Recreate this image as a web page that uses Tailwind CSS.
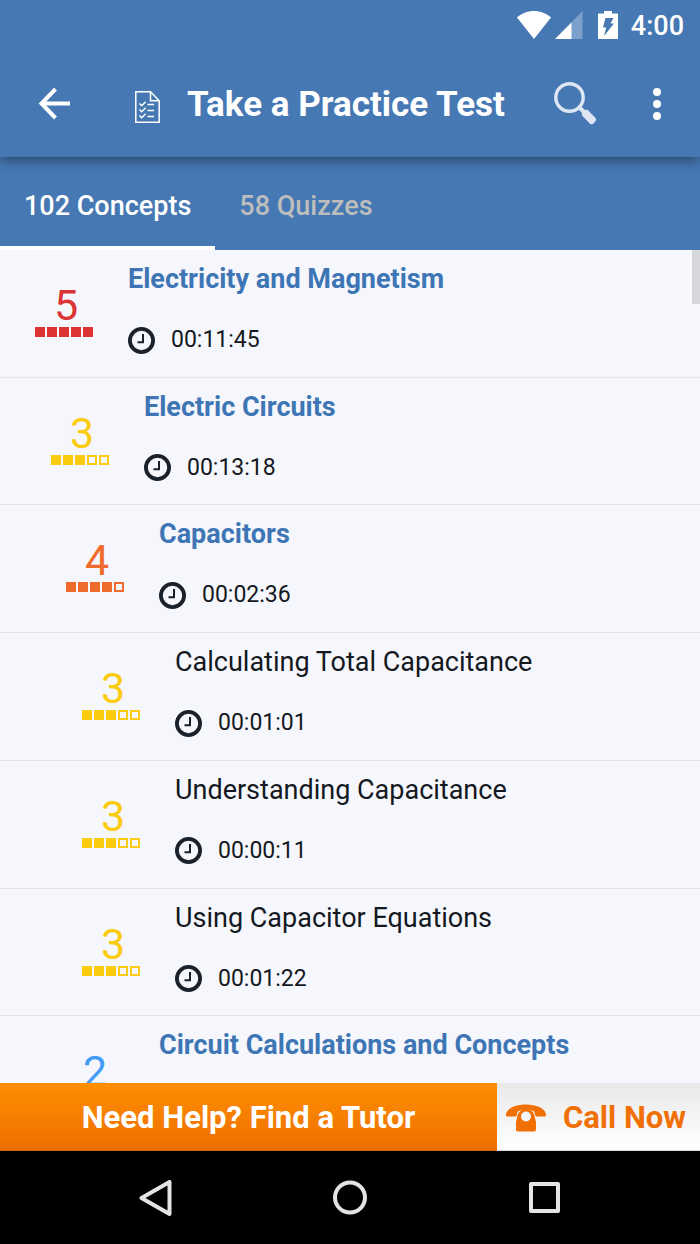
<!DOCTYPE html>
<html lang="en">

<head>
    <meta charset="UTF-8">
    <meta name="viewport" content="width=device-width, initial-scale=1.0">
    <script src="https://cdn.jsdelivr.net/npm/@tailwindcss/browser@4"></script>
    <title>Take a Practice Test</title>
</head>

<body class="h-screen flex flex-col overflow-hidden bg-[#f6f7fc] font-['Roboto',sans-serif] text-[#14181f]">

    <!-- Shared icons -->
    <svg class="hidden">
        <symbol id="clock" viewBox="0 0 27 27">
            <circle cx="13.5" cy="13.5" r="11.6" fill="none" stroke="#1b212a" stroke-width="3.8" />
            <path d="M15 7v8.3H9.5" fill="none" stroke="#1b212a" stroke-width="2" />
        </symbol>
    </svg>

    <header class="relative z-10 bg-[#4678b3] text-white shadow-[0_3px_12px_rgba(0,0,0,0.45)]">
        <!-- Status bar -->
        <div class="flex h-[50px] items-center justify-end pr-4">
            <svg class="h-7 w-[34px]" viewBox="0 0 34 28" fill="#fff">
                <path d="M17 28 0 6.5C4.500 2.500 10.500 0 17 0s12.500 2.500 17 6.500z" />
            </svg>
            <svg class="ml-1 h-7 w-7" viewBox="0 0 28 28" fill="#fff">
                <path d="M27.500 0v28H0z" opacity=".3" />
                <path d="M16.500 11.500V28H0z" />
            </svg>
            <svg class="ml-[15px] h-7 w-5" viewBox="0 0 20 28">
                <path d="M6 0h8v2.500h6V28H0V2.500h6z" fill="#fff" />
                <path d="M7.500 7h8L12.500 12.500h3.500L6 25l2.200-8.500H5z" fill="#4678b3" />
            </svg>
            <span class="ml-[13px] pt-0.5 text-[27px] leading-8 font-medium">4:00</span>
        </div>

        <!-- Toolbar -->
        <div class="flex h-[107px] items-center pr-[26px] pl-[38px]">
            <button type="button" aria-label="Back" class="h-8 w-8">
                <svg class="h-8 w-8" viewBox="0 0 32 32" fill="none" stroke="#fff" stroke-width="4">
                    <path d="M32 15.500H4M17.500 1 3.500 15.500l14 14.500" />
                </svg>
            </button>
            <svg class="mt-1.5 ml-[65px] h-8 w-[25px]" viewBox="0 0 25 32" fill="none" stroke="#fff" stroke-width="1.500">
                <path d="M.8.8H15.500l8.700 9v21.400H.8zM15.500.8v9h8.700" />
                <path d="m4.500 12.500 2.200 2.200 4-4M4.500 18.500l2.200 2.200 4-4M4.500 24.500l2.200 2.200 4-4M12.500 13.500h6.500M12.500 19.500h6.500M12.500 25.500h6.500" />
            </svg>
            <h1 class="ml-[27px] pt-0.5 text-[35px] leading-10 font-bold whitespace-nowrap">Take a Practice Test</h1>
            <button type="button" aria-label="Search" class="ml-auto h-[43px] w-[43px]">
                <svg class="h-[43px] w-[43px]" viewBox="0 0 43 43" fill="none">
                    <circle cx="15.500" cy="15.500" r="13.700" stroke="#dde6f2" stroke-width="3.400" />
                    <path d="m25 25 5 5" stroke="#dde6f2" stroke-width="4" />
                    <path d="M28 30.500 31 28q1.500-1 3 .3l7.500 7.700q1.200 1.300.3 2.800L39.500 41.500q-1.500 1.500-3.500.2L29 34.500q-1.800-2-1-4z" fill="#dde6f2" />
                </svg>
            </button>
            <button type="button" aria-label="More options" class="ml-[43px] flex h-8 w-[34px] flex-col items-center justify-between">
                <span class="h-2 w-2 rounded-full bg-white"></span>
                <span class="h-2 w-2 rounded-full bg-white"></span>
                <span class="h-2 w-2 rounded-full bg-white"></span>
            </button>
        </div>
    </header>

    <!-- Tabs -->
    <nav class="flex h-[93px] shrink-0 bg-[#4678b3] text-[27px] leading-8 font-medium">
        <button type="button" class="border-b-4 border-white px-6 pt-2 text-white">102 Concepts</button>
        <button type="button" class="border-b-4 border-transparent px-6 pt-2 text-[#bdbdbd]">58 Quizzes</button>
    </nav>

    <!-- Concepts -->
    <main class="relative min-h-0 flex-1 overflow-hidden">
        <ul class="grid h-[894px] auto-rows-fr">
            <li class="flex border-b border-[#e3e5ea] pl-[35px]">
                <div class="w-[58px] shrink-0 pt-[34px] text-center text-[#dc3434]">
                    <div class="pl-1 text-[43px] leading-[43px]">5</div>
                    <div class="flex gap-0.5">
                        <span class="h-2.5 w-2.5 bg-current"></span>
                        <span class="h-2.5 w-2.5 bg-current"></span>
                        <span class="h-2.5 w-2.5 bg-current"></span>
                        <span class="h-2.5 w-2.5 bg-current"></span>
                        <span class="h-2.5 w-2.5 bg-current"></span>
                    </div>
                </div>
                <div class="pt-[13px] pl-[35px]">
                    <a href="#" class="block text-[27px] leading-8 font-bold text-[#3e76b5]">Electricity and Magnetism</a>
                    <p class="mt-[29px] flex items-center gap-4 text-[23px] leading-8">
                        <svg class="h-[27px] w-[27px]"><use href="#clock" /></svg>00:11:45
                    </p>
                </div>
            </li>
            <li class="flex border-b border-[#e3e5ea] pl-[51px]">
                <div class="w-[58px] shrink-0 pt-[34px] text-center text-[#fbcb10]">
                    <div class="pl-1 text-[43px] leading-[43px]">3</div>
                    <div class="flex gap-0.5">
                        <span class="h-2.5 w-2.5 bg-current"></span>
                        <span class="h-2.5 w-2.5 bg-current"></span>
                        <span class="h-2.5 w-2.5 bg-current"></span>
                        <span class="h-2.5 w-2.5 border-2 border-current"></span>
                        <span class="h-2.5 w-2.5 border-2 border-current"></span>
                    </div>
                </div>
                <div class="pt-[13px] pl-[35px]">
                    <a href="#" class="block text-[27px] leading-8 font-bold text-[#3e76b5]">Electric Circuits</a>
                    <p class="mt-[29px] flex items-center gap-4 text-[23px] leading-8">
                        <svg class="h-[27px] w-[27px]"><use href="#clock" /></svg>00:13:18
                    </p>
                </div>
            </li>
            <li class="flex border-b border-[#e3e5ea] pl-[66px]">
                <div class="w-[58px] shrink-0 pt-[34px] text-center text-[#f06c2c]">
                    <div class="pl-1 text-[43px] leading-[43px]">4</div>
                    <div class="flex gap-0.5">
                        <span class="h-2.5 w-2.5 bg-current"></span>
                        <span class="h-2.5 w-2.5 bg-current"></span>
                        <span class="h-2.5 w-2.5 bg-current"></span>
                        <span class="h-2.5 w-2.5 bg-current"></span>
                        <span class="h-2.5 w-2.5 border-2 border-current"></span>
                    </div>
                </div>
                <div class="pt-[13px] pl-[35px]">
                    <a href="#" class="block text-[27px] leading-8 font-bold text-[#3e76b5]">Capacitors</a>
                    <p class="mt-[29px] flex items-center gap-4 text-[23px] leading-8">
                        <svg class="h-[27px] w-[27px]"><use href="#clock" /></svg>00:02:36
                    </p>
                </div>
            </li>
            <li class="flex border-b border-[#e3e5ea] pl-[82px]">
                <div class="w-[58px] shrink-0 pt-[34px] text-center text-[#fbcb10]">
                    <div class="pl-1 text-[43px] leading-[43px]">3</div>
                    <div class="flex gap-0.5">
                        <span class="h-2.5 w-2.5 bg-current"></span>
                        <span class="h-2.5 w-2.5 bg-current"></span>
                        <span class="h-2.5 w-2.5 bg-current"></span>
                        <span class="h-2.5 w-2.5 border-2 border-current"></span>
                        <span class="h-2.5 w-2.5 border-2 border-current"></span>
                    </div>
                </div>
                <div class="pt-[13px] pl-[35px]">
                    <a href="#" class="block text-[27px] leading-8">Calculating Total Capacitance</a>
                    <p class="mt-[29px] flex items-center gap-4 text-[23px] leading-8">
                        <svg class="h-[27px] w-[27px]"><use href="#clock" /></svg>00:01:01
                    </p>
                </div>
            </li>
            <li class="flex border-b border-[#e3e5ea] pl-[82px]">
                <div class="w-[58px] shrink-0 pt-[34px] text-center text-[#fbcb10]">
                    <div class="pl-1 text-[43px] leading-[43px]">3</div>
                    <div class="flex gap-0.5">
                        <span class="h-2.5 w-2.5 bg-current"></span>
                        <span class="h-2.5 w-2.5 bg-current"></span>
                        <span class="h-2.5 w-2.5 bg-current"></span>
                        <span class="h-2.5 w-2.5 border-2 border-current"></span>
                        <span class="h-2.5 w-2.5 border-2 border-current"></span>
                    </div>
                </div>
                <div class="pt-[13px] pl-[35px]">
                    <a href="#" class="block text-[27px] leading-8">Understanding Capacitance</a>
                    <p class="mt-[29px] flex items-center gap-4 text-[23px] leading-8">
                        <svg class="h-[27px] w-[27px]"><use href="#clock" /></svg>00:00:11
                    </p>
                </div>
            </li>
            <li class="flex border-b border-[#e3e5ea] pl-[82px]">
                <div class="w-[58px] shrink-0 pt-[34px] text-center text-[#fbcb10]">
                    <div class="pl-1 text-[43px] leading-[43px]">3</div>
                    <div class="flex gap-0.5">
                        <span class="h-2.5 w-2.5 bg-current"></span>
                        <span class="h-2.5 w-2.5 bg-current"></span>
                        <span class="h-2.5 w-2.5 bg-current"></span>
                        <span class="h-2.5 w-2.5 border-2 border-current"></span>
                        <span class="h-2.5 w-2.5 border-2 border-current"></span>
                    </div>
                </div>
                <div class="pt-[13px] pl-[35px]">
                    <a href="#" class="block text-[27px] leading-8">Using Capacitor Equations</a>
                    <p class="mt-[29px] flex items-center gap-4 text-[23px] leading-8">
                        <svg class="h-[27px] w-[27px]"><use href="#clock" /></svg>00:01:22
                    </p>
                </div>
            </li>
            <li class="flex pl-[66px]">
                <div class="w-[58px] shrink-0 pt-[34px] text-center text-[#449cf6]">
                    <div class="text-[43px] leading-[43px]">2</div>
                </div>
                <div class="pt-[13px] pl-[35px]">
                    <a href="#" class="block text-[27px] leading-8 font-bold text-[#3e76b5]">Circuit Calculations and Concepts</a>
                </div>
            </li>
        </ul>
        <!-- Scroll thumb -->
        <div class="absolute top-0 right-0 h-[54px] w-2 bg-[#d6d7db]"></div>
    </main>

    <!-- Help bar -->
    <div class="flex h-[68px] shrink-0 text-[31px] leading-9 font-bold">
        <button type="button" class="w-[71%] border-b border-[#d96a08] bg-linear-to-b from-[#ff8e02] to-[#ee6f00] pt-0.5 text-white">Need Help? Find a Tutor</button>
        <button type="button" class="flex flex-1 items-center gap-[17px] border-b border-[#d5d5d5] bg-linear-to-b from-[#e9e9e9] to-white pt-0.5 pl-[9px] whitespace-nowrap text-[#f07005]">
            <svg class="h-7 w-10 shrink-0" viewBox="0 0 40 28" fill="currentColor">
                <path d="M0 10C1.500 4 10 .5 20 .5S38.500 4 40 10c.2 1.500-.3 2.500-1.500 2.500H31c-1 0-1.500-.5-1.800-1.500L28.300 7.500C24 4.800 16 4.800 11.700 7.500L10.800 11c-.3 1-.8 1.500-1.800 1.500H1.500C.3 12.500-.2 11.500 0 10z" />
                <path fill-rule="evenodd" d="M20 5c5.500 0 8.500 4 9 9l1 4v7.500c0 1.200-.7 2-2 2H12c-1.300 0-2-.8-2-2V18l1-4c.5-5 3.500-9 9-9zm0 2.500a5 5 0 1 0 0 10 5 5 0 0 0 0-10z" />
            </svg>
            Call Now
        </button>
    </div>

    <!-- System navigation -->
    <nav class="flex h-[93px] shrink-0 items-center justify-center gap-40 bg-black">
        <button type="button" aria-label="Back" class="h-9 w-9">
            <svg class="h-9 w-9" viewBox="0 0 36 36" fill="none" stroke="#e4e4e4" stroke-width="4" stroke-linejoin="round">
                <path d="M33.500 2v32L5.500 18z" />
            </svg>
        </button>
        <button type="button" aria-label="Home" class="h-9 w-9">
            <svg class="h-9 w-9" viewBox="0 0 36 36" fill="none" stroke="#e4e4e4" stroke-width="4">
                <circle cx="18" cy="17.500" r="15" />
            </svg>
        </button>
        <button type="button" aria-label="Recent apps" class="h-9 w-9">
            <svg class="h-9 w-9" viewBox="0 0 36 36" fill="none" stroke="#e4e4e4" stroke-width="4" stroke-linejoin="round">
                <path d="M3 4h27v27H3z" />
            </svg>
        </button>
    </nav>
</body>

</html>
